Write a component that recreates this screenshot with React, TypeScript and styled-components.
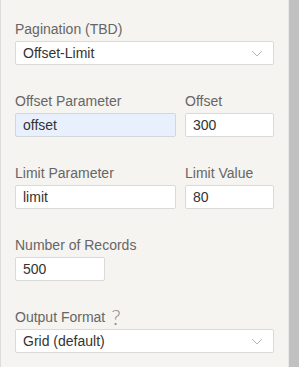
import React from 'react'
import styled, { createGlobalStyle } from 'styled-components'

const GlobalStyle = createGlobalStyle`
  html, body {
    margin: 0;
    padding: 0;
    background: #f5f4f0;
  }
  body {
    font-family: 'Liberation Sans', Arial, sans-serif;
  }
`

const Frame = styled.div`
  display: flex;
  width: 299px;
  height: 367px;
  overflow: hidden;
`

const Panel = styled.div`
  flex: 1;
  border-left: 1px solid #dcdcdc;
  border-right: 1px solid #e8e8e8;
  padding: 21px 14px 0 14px;
  background: #f5f4f0;
`

const ScrollTrack = styled.div`
  width: 10px;
  background: #c1c1c1;
`

const Group = styled.div`
  margin-bottom: 28px;
`

const Row = styled.div`
  display: grid;
  grid-template-columns: 161px 89px;
  column-gap: 9px;
  margin-bottom: 28px;
`

const Label = styled.div`
  font-size: 14px;
  line-height: 16px;
  height: 16px;
  color: #666;
  margin-bottom: 4px;
  display: flex;
  align-items: center;
`

const Help = styled.span`
  margin-left: 6px;
  font-size: 22px;
  line-height: 16px;
  color: #8a8a8a;
  font-family: Lato, 'Liberation Sans', sans-serif;
  font-weight: 300;
`

const Input = styled.div<{ $width?: number; $autofill?: boolean }>`
  box-sizing: border-box;
  width: ${({ $width }) => ($width ? `${$width}px` : '100%')};
  height: 24px;
  display: flex;
  align-items: center;
  padding-left: 7px;
  font-size: 14px;
  color: #333;
  background: ${({ $autofill }) => ($autofill ? '#e8f0fe' : '#fff')};
  border: 1px solid ${({ $autofill }) => ($autofill ? '#d3d6db' : '#dadada')};
  border-radius: 2px;
`

const Select = styled(Input)`
  justify-content: space-between;
  padding-right: 10px;
`

function Chevron() {
  return (
    <svg width="12" height="7" viewBox="0 0 12 7">
      <path d="M1 1 L6 6 L11 1" fill="none" stroke="#b5b5b5" strokeWidth="1" />
    </svg>
  )
}

export default function App() {
  return (
    <>
      <GlobalStyle />
      <Frame>
        <Panel>
          <Group>
            <Label>Pagination (TBD)</Label>
            <Select>
              <span>Offset-Limit</span>
              <Chevron />
            </Select>
          </Group>
          <Row>
            <div>
              <Label>Offset Parameter</Label>
              <Input $autofill>offset</Input>
            </div>
            <div>
              <Label>Offset</Label>
              <Input>300</Input>
            </div>
          </Row>
          <Row>
            <div>
              <Label>Limit Parameter</Label>
              <Input>limit</Input>
            </div>
            <div>
              <Label>Limit Value</Label>
              <Input>80</Input>
            </div>
          </Row>
          <Group>
            <Label>Number of Records</Label>
            <Input $width={90}>500</Input>
          </Group>
          <Group>
            <Label>
              Output Format<Help>?</Help>
            </Label>
            <Select>
              <span>Grid (default)</span>
              <Chevron />
            </Select>
          </Group>
        </Panel>
        <ScrollTrack />
      </Frame>
    </>
  )
}
